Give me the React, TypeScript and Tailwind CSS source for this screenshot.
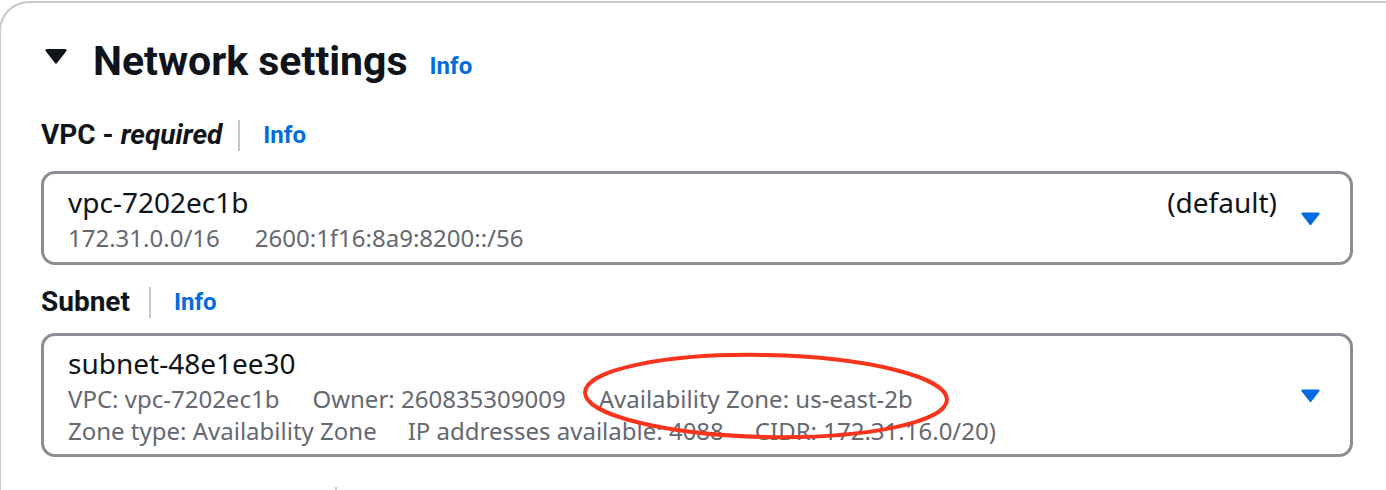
import React from 'react';

function Caret({ className }: { className?: string }) {
  return (
    <svg viewBox="0 0 22 16" className={className}>
      <path d="M2.5 1.5h17a1.2 1.2 0 0 1 1 1.9l-8.5 11a1.2 1.2 0 0 1-2 0l-8.5-11a1.2 1.2 0 0 1 1-1.9z" fill="currentColor" />
    </svg>
  );
}

function FieldLabel({ children, gap }: { children: React.ReactNode; gap: string }) {
  return (
    <div className="flex h-[40px] items-center">
      <span className="text-[28px] font-bold leading-[40px] text-[#0f141a]">{children}</span>
      <div className={`h-[31px] w-[2px] bg-[#c6c6cd] ${gap}`} />
      <a className="ml-[23px] text-[24px] font-bold leading-[40px] text-[#006ce0]">Info</a>
    </div>
  );
}

export default function App() {
  return (
    <div className="relative h-[490px] w-[1386px] overflow-hidden bg-white font-['Roboto',sans-serif]">
      <div className="ml-[-1px] mt-[1px] h-[640px] w-[1440px] rounded-tl-[30px] border-l-2 border-t-2 border-[#c6c6cd] pl-[40px] pt-[34px]">
        {/* section header */}
        <div className="flex h-[48px] items-start">
          <Caret className="ml-[3px] mt-[10px] h-[18px] w-[24px] text-[#0f141a]" />
          <h2 className="ml-[25px] text-[41px] font-bold leading-[48px] text-[#0f141a]">Network settings</h2>
          <a className="ml-[22px] mt-[5px] text-[24px] font-bold leading-[48px] text-[#006ce0]">Info</a>
        </div>

        {/* VPC */}
        <div className="mt-[30px]">
          <FieldLabel gap="ml-[16px]">
            VPC - <i>required</i>
          </FieldLabel>
        </div>
        <div className="mt-[16px] flex h-[94px] w-[1312px] items-center rounded-[14px] border-[3px] border-[#8c8c94] pl-[24px] pr-[29px] font-['Noto_Sans',sans-serif]">
          <div className="flex flex-1 flex-col">
            <div className="flex justify-between text-[28px] leading-[40px] text-[#0f141a]">
              <span>vpc-7202ec1b</span>
              <span>(default)</span>
            </div>
            <div className="flex gap-[35px] text-[24px] leading-[32px] text-[#656871]">
              <span>172.31.0.0/16</span>
              <span>2600:1f16:8a9:8200::/56</span>
            </div>
          </div>
          <Caret className="ml-[23px] h-[15px] w-[21px] text-[#006ce0]" />
        </div>

        {/* Subnet */}
        <div className="mt-[17px]">
          <FieldLabel gap="ml-[19px]">Subnet</FieldLabel>
        </div>
        <div className="mt-[11px] flex h-[124px] w-[1312px] items-center rounded-[14px] border-[3px] border-[#8c8c94] pl-[24px] pr-[29px] font-['Noto_Sans',sans-serif]">
          <div className="flex flex-1 flex-col">
            <div className="text-[28px] leading-[40px] text-[#0f141a]">subnet-48e1ee30</div>
            <div className="flex gap-[33px] text-[24px] leading-[32px] text-[#656871]">
              <span>VPC: vpc-7202ec1b</span>
              <span>Owner: 260835309009</span>
              <span>Availability Zone: us-east-2b</span>
            </div>
            <div className="flex gap-[31px] text-[24px] leading-[32px] text-[#656871]">
              <span>Zone type: Availability Zone</span>
              <span>IP addresses available: 4088</span>
              <span>CIDR: 172.31.16.0/20)</span>
            </div>
          </div>
          <Caret className="ml-[23px] h-[15px] w-[21px] text-[#006ce0]" />
        </div>

        {/* start of next field, cut off */}
        <div className="ml-[294px] mt-[30px] h-[10px] w-[2px] bg-[#c6c6cd]" />
      </div>

      {/* annotation */}
      <svg className="absolute left-[578px] top-[348px] h-[96px] w-[376px]" viewBox="0 0 376 96">
        <ellipse cx="188" cy="48" rx="181" ry="41" fill="none" stroke="#f8341c" strokeWidth="4" transform="rotate(1.2 188 48)" />
      </svg>
    </div>
  );
}
